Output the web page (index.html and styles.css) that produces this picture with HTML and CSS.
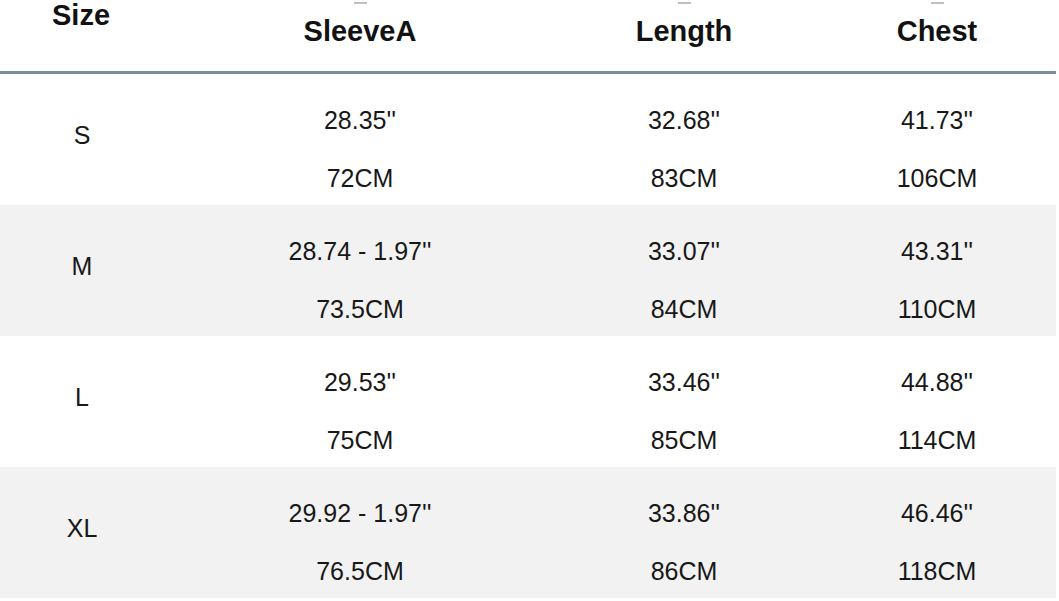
FILE: index.html
```html
<!DOCTYPE html>
<html>
<head>
<meta charset="utf-8">
<link rel="stylesheet" href="styles.css">
</head>
<body>
<div class="chart">
  <div class="row head">
    <div class="cell c-size first"><span class="h">Size</span></div>
    <div class="cell"><span class="mark"></span><span class="h">SleeveA</span></div>
    <div class="cell"><span class="mark"></span><span class="h">Length</span></div>
    <div class="cell last"><span class="mark"></span><span class="h">Chest</span></div>
  </div>
  <div class="row body">
    <div class="cell label">S</div>
    <div class="cell vals"><span>28.35''</span><span>72CM</span></div>
    <div class="cell vals"><span>32.68''</span><span>83CM</span></div>
    <div class="cell vals last"><span>41.73''</span><span>106CM</span></div>
  </div>
  <div class="row body alt">
    <div class="cell label">M</div>
    <div class="cell vals"><span>28.74 - 1.97''</span><span>73.5CM</span></div>
    <div class="cell vals"><span>33.07''</span><span>84CM</span></div>
    <div class="cell vals last"><span>43.31''</span><span>110CM</span></div>
  </div>
  <div class="row body">
    <div class="cell label">L</div>
    <div class="cell vals"><span>29.53''</span><span>75CM</span></div>
    <div class="cell vals"><span>33.46''</span><span>85CM</span></div>
    <div class="cell vals last"><span>44.88''</span><span>114CM</span></div>
  </div>
  <div class="row body alt">
    <div class="cell label">XL</div>
    <div class="cell vals"><span>29.92 - 1.97''</span><span>76.5CM</span></div>
    <div class="cell vals"><span>33.86''</span><span>86CM</span></div>
    <div class="cell vals last"><span>46.46''</span><span>118CM</span></div>
  </div>
</div>
</body>
</html>
```
FILE: styles.css
```css
html, body {
  margin: 0;
  padding: 0;
  background: #ffffff;
}
body {
  font-family: "Liberation Sans", Arial, Helvetica, sans-serif;
  color: #181818;
  overflow: hidden;
}
.chart {
  width: 1056px;
}
.row {
  display: grid;
  grid-template-columns: 164px 392px 256px 244px;
}
.head {
  height: 71px;
  border-bottom: 3px solid #7b8e9a;
  box-shadow: 0 -1px 0 #e6f0f4;
}
.cell {
  display: flex;
  flex-direction: column;
  align-items: center;
  text-align: center;
}
.last {
  padding-left: 6px;
}
.head .cell {
  padding-top: 2px;
}
.head .first {
  padding-top: 0;
}
.mark {
  width: 13px;
  height: 2px;
  background: #b9c0c6;
  margin-bottom: 12px;
}
.h {
  font-weight: bold;
  font-size: 29px;
  line-height: 30px;
  color: #121212;
}
.first .h {
  margin-left: -2px;
}
.body {
  height: 131px;
}
.alt {
  background: #f2f2f2;
}
.label {
  justify-content: center;
  padding-bottom: 11px;
  font-size: 25px;
  line-height: 30px;
}
.vals {
  padding-top: 17px;
  font-size: 25px;
  line-height: 58px;
}
.vals span {
  display: block;
  white-space: nowrap;
}
```
